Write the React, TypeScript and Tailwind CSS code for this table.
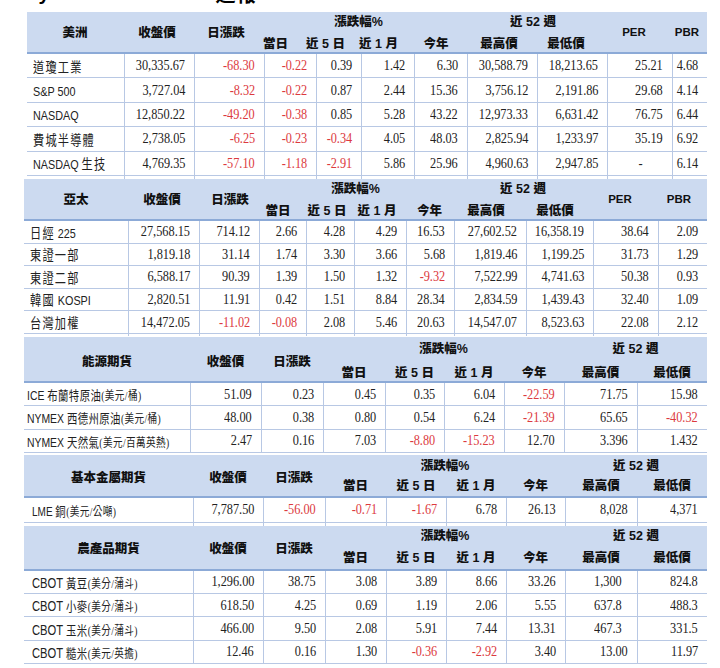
import React from "react";

type Cfg = {
  title: string;
  wrap: string;
  cols: string;
  hcols: string;
  hrows: string;
  hp: string[];
  spanPad: string;
  r2Pad: string;
  rowH: string;
  sliver?: string;
  namePad: string;
  latin: string;
  cjk: string;
  unit: string;
  per: boolean;
  rows: string[][];
  padEx?: Record<string, string>;
};

const LINE = "border-[#b8c8e4]";

const tables: Cfg[] = [
  {
    title: "美洲",
    wrap: "ml-[27px] mt-[6px] w-[680px]",
    cols: "grid-cols-[97px_70px_70px_52px_45px_53px_53px_70px_70px_65px_35px]",
    hcols: "grid-cols-[89px_75px_60px_49px_51px_55px_60px_66px_68px_60px_47px]",
    hrows: "grid-rows-[20px_20px]",
    hp: ["pl-[7px]", "pl-[7px]", "pl-[10px]", "", "", "", "", "", "", "pl-[8px]", "pl-[7px]"],
    spanPad: "pt-[2px]",
    r2Pad: "pt-[4px]",
    rowH: "h-[24.4px]",
    sliver: "h-[3px]",
    namePad: "pl-[6px]",
    latin: "text-[13.5px]",
    cjk: "text-[14px] tracking-[1.5px]",
    unit: "text-[11px] tracking-[0.5px]",
    per: true,
    rows: [
      ["道瓊工業", "30,335.67", "-68.30", "-0.22", "0.39", "1.42", "6.30", "30,588.79", "18,213.65", "25.21", "4.68"],
      ["S&P 500", "3,727.04", "-8.32", "-0.22", "0.87", "2.44", "15.36", "3,756.12", "2,191.86", "29.68", "4.14"],
      ["NASDAQ", "12,850.22", "-49.20", "-0.38", "0.85", "5.28", "43.22", "12,973.33", "6,631.42", "76.75", "6.44"],
      ["費城半導體", "2,738.05", "-6.25", "-0.23", "-0.34", "4.05", "48.03", "2,825.94", "1,233.97", "35.19", "6.92"],
      ["NASDAQ 生技", "4,769.35", "-57.10", "-1.18", "-2.91", "5.86", "25.96", "4,960.63", "2,947.85", "-", "6.14"],
    ],
  },
  {
    title: "亞太",
    wrap: "ml-[24px] w-[683px]",
    cols: "grid-cols-[104px_71px_60px_47px_48px_52px_48px_72px_67px_65px_49px]",
    hcols: "grid-cols-[95px_77px_58px_48px_50px_50px_55px_64px_68px_62px_56px]",
    hrows: "grid-rows-[20px_20px]",
    hp: ["pl-[9px]", "pl-[9px]", "pl-[10px]", "", "", "", "", "pr-[6px]", "", "", ""],
    spanPad: "pt-[2px]",
    r2Pad: "pt-[4px]",
    rowH: "h-[22.6px]",
    sliver: "h-[2px]",
    namePad: "pl-[6px]",
    latin: "text-[13.5px]",
    cjk: "text-[14px] tracking-[1.5px]",
    unit: "text-[11px] tracking-[0.5px]",
    per: true,
    rows: [
      ["日經 225", "27,568.15", "714.12", "2.66", "4.28", "4.29", "16.53", "27,602.52", "16,358.19", "38.64", "2.09"],
      ["東證一部", "1,819.18", "31.14", "1.74", "3.30", "3.66", "5.68", "1,819.46", "1,199.25", "31.73", "1.29"],
      ["東證二部", "6,588.17", "90.39", "1.39", "1.50", "1.32", "-9.32", "7,522.99", "4,741.63", "50.38", "0.93"],
      ["韓國 KOSPI", "2,820.51", "11.91", "0.42", "1.51", "8.84", "28.34", "2,834.59", "1,439.43", "32.40", "1.09"],
      ["台灣加權", "14,472.05", "-11.02", "-0.08", "2.08", "5.46", "20.63", "14,547.07", "8,523.63", "22.08", "2.12"],
    ],
  },
  {
    title: "能源期貨",
    wrap: "ml-[24px] mt-[1px] w-[683px]",
    cols: "grid-cols-[166px_71px_62px_62px_59px_60px_60px_73px_70px]",
    hcols: "grid-cols-[166px_71px_62px_62px_59px_60px_60px_73px_70px]",
    hrows: "grid-rows-[24px_20px]",
    hp: ["", "", "", "", "", "", "", "", ""],
    spanPad: "pt-[6px]",
    r2Pad: "pt-[4px]",
    rowH: "h-[23.3px]",
    namePad: "pl-[3px]",
    latin: "text-[13px]",
    cjk: "text-[13px] tracking-[0.5px]",
    unit: "text-[12px] tracking-[0.5px]",
    per: false,
    rows: [
      ["ICE 布蘭特原油(美元/桶)", "51.09", "0.23", "0.45", "0.35", "6.04", "-22.59", "71.75", "15.98"],
      ["NYMEX 西德州原油(美元/桶)", "48.00", "0.38", "0.80", "0.54", "6.24", "-21.39", "65.65", "-40.32"],
      ["NYMEX 天然氣(美元/百萬英熱)", "2.47", "0.16", "7.03", "-8.80", "-15.23", "12.70", "3.396", "1.432"],
    ],
  },
  {
    title: "基本金屬期貨",
    wrap: "ml-[24px] mt-[2px] w-[683px]",
    cols: "grid-cols-[169px_70px_62px_61px_60px_60px_59px_72px_70px]",
    hcols: "grid-cols-[169px_70px_62px_61px_60px_60px_59px_72px_70px]",
    hrows: "grid-rows-[22px_19px]",
    hp: ["", "", "", "", "", "", "", "", ""],
    spanPad: "pt-[5px]",
    r2Pad: "",
    rowH: "h-[25px]",
    sliver: "h-[3px]",
    namePad: "pl-[8px]",
    latin: "text-[12.5px]",
    cjk: "text-[13px] tracking-[0.5px]",
    unit: "text-[12px] tracking-[0.5px]",
    per: false,
    rows: [["LME 銅(美元/公噸)", "7,787.50", "-56.00", "-0.71", "-1.67", "6.78", "26.13", "8,028", "4,371"]],
  },
  {
    title: "農產品期貨",
    wrap: "ml-[24px] w-[683px]",
    cols: "grid-cols-[169px_70px_62px_61px_60px_60px_59px_72px_70px]",
    hcols: "grid-cols-[169px_70px_62px_61px_60px_60px_59px_72px_70px]",
    hrows: "grid-rows-[21px_22px]",
    hp: ["", "", "", "", "", "", "", "", ""],
    spanPad: "pt-[3px]",
    r2Pad: "",
    rowH: "h-[23.3px]",
    namePad: "pl-[8px]",
    latin: "text-[14px]",
    cjk: "text-[13px] tracking-[0.5px]",
    unit: "text-[12px] tracking-[0.5px]",
    per: false,
    rows: [
      ["CBOT 黃豆(美分/蒲斗)", "1,296.00", "38.75", "3.08", "3.89", "8.66", "33.26", "1,300", "824.8"],
      ["CBOT 小麥(美分/蒲斗)", "618.50", "4.25", "0.69", "1.19", "2.06", "5.55", "637.8", "488.3"],
      ["CBOT 玉米(美分/蒲斗)", "466.00", "9.50", "2.08", "5.91", "7.44", "13.31", "467.3", "331.5"],
      ["CBOT 糙米(美元/英擔)", "12.46", "0.16", "1.30", "-0.36", "-2.92", "3.40", "13.00", "11.97"],
    ],
    padEx: { "0-6": "pr-[15px]", "1-6": "pr-[15px]", "2-6": "pr-[15px]" },
  },
];

function Name({ text, cfg }: { text: string; cfg: Cfg }) {
  const parts: { t: string; k: "u" | "l" | "c" }[] = [];
  const re = /(\([^)]*\))|([\x20-\x7E]+)|([^\x20-\x7E]+)/g;
  let m: RegExpExecArray | null;
  while ((m = re.exec(text))) {
    if (m[1]) parts.push({ t: m[1], k: "u" });
    else if (m[2]) parts.push({ t: m[2], k: "l" });
    else parts.push({ t: m[3], k: "c" });
  }
  return (
    <span className="inline-block origin-left scale-x-[0.8] whitespace-nowrap text-[#222] leading-none">
      {parts.map((p, i) => (
        <span
          key={i}
          className={
            p.k === "l"
              ? `font-['Liberation_Sans',sans-serif] ${cfg.latin}`
              : p.k === "c"
              ? `font-['Noto_Sans_CJK_TC',sans-serif] ${cfg.cjk}`
              : `font-['Liberation_Serif','Noto_Sans_CJK_TC',serif] ${cfg.unit}`
          }
        >
          {p.t}
        </span>
      ))}
    </span>
  );
}

function Num({ v, pad }: { v: string; pad?: string }) {
  const neg = v.startsWith("-") && v.length > 1;
  const dash = v === "-";
  return (
    <div
      className={`flex items-center border-l ${LINE} ${dash ? "justify-center" : `justify-end ${pad ?? "pr-[9px]"}`}`}
    >
      <span
        className={`inline-block ${dash ? "origin-center" : "origin-right"} scale-x-[0.82] font-['Liberation_Serif',serif] text-[15px] leading-none whitespace-nowrap ${
          neg ? "text-[#dc3a3e]" : "text-[#222]"
        }`}
      >
        {v}
      </span>
    </div>
  );
}

function Header({ cfg }: { cfg: Cfg }) {
  const base = "flex items-center justify-center whitespace-nowrap";
  const h = cfg.hp;
  const sub = ["當日", "近 5 日", "近 1 月", "今年", "最高價", "最低價"];
  return (
    <div
      className={`grid ${cfg.hcols} ${cfg.hrows} bg-[#ccdaf0] border-b-2 border-[#8caad7] text-[12.5px] font-black text-[#111] font-['Liberation_Sans','Noto_Sans_CJK_TC',sans-serif] leading-none`}
    >
      <div className={`${base} row-span-2 ${cfg.spanPad} ${h[0]}`}>{cfg.title}</div>
      <div className={`${base} row-span-2 ${cfg.spanPad} ${h[1]}`}>收盤價</div>
      <div className={`${base} row-span-2 ${cfg.spanPad} ${h[2]}`}>日漲跌</div>
      <div className={`${base} col-span-4`}>漲跌幅%</div>
      <div className={`${base} col-span-2`}>近 52 週</div>
      {cfg.per && (
        <>
          <div className={`${base} row-span-2 ${cfg.spanPad} ${h[9]} text-[11.5px]`}>PER</div>
          <div className={`${base} row-span-2 ${cfg.spanPad} ${h[10]} text-[11.5px]`}>PBR</div>
        </>
      )}
      {sub.map((t, i) => (
        <div key={t} className={`${base} ${cfg.r2Pad} ${h[3 + i]}`}>
          {t}
        </div>
      ))}
    </div>
  );
}

function Table({ cfg }: { cfg: Cfg }) {
  const n = cfg.rows[0].length;
  return (
    <div className={cfg.wrap}>
      <Header cfg={cfg} />
      {cfg.rows.map((r, ri) => (
        <div key={ri} className={`grid ${cfg.cols} ${cfg.rowH} border-b ${LINE}`}>
          <div className={`flex items-center ${cfg.namePad}`}>
            <Name text={r[0]} cfg={cfg} />
          </div>
          {r.slice(1).map((v, ci) => (
            <Num key={ci} v={v} pad={cfg.padEx?.[`${ri}-${ci}`]} />
          ))}
        </div>
      ))}
      {cfg.sliver && (
        <div className={`grid ${cfg.cols} ${cfg.sliver}`}>
          {Array.from({ length: n }).map((_, i) => (
            <div key={i} className={i === 0 ? "" : `border-l ${LINE}`} />
          ))}
        </div>
      )}
    </div>
  );
}

export default function App() {
  return (
    <div className="w-[720px] h-[668px] overflow-hidden bg-white">
      <div className="h-[6px] overflow-hidden flex items-start">
        <div className="-ml-[19px] -mt-[17px] h-[20px] text-[20px] leading-[20px] font-bold font-['Liberation_Sans',sans-serif] text-black whitespace-nowrap">
          Weekly
        </div>
        <div className="ml-[166px] -mt-[16px] h-[20px] text-[20px] leading-[20px] font-bold font-['Noto_Sans_CJK_TC',sans-serif] text-black whitespace-nowrap">
          週報
        </div>
      </div>
      {tables.map((t) => (
        <Table key={t.title} cfg={t} />
      ))}
    </div>
  );
}
